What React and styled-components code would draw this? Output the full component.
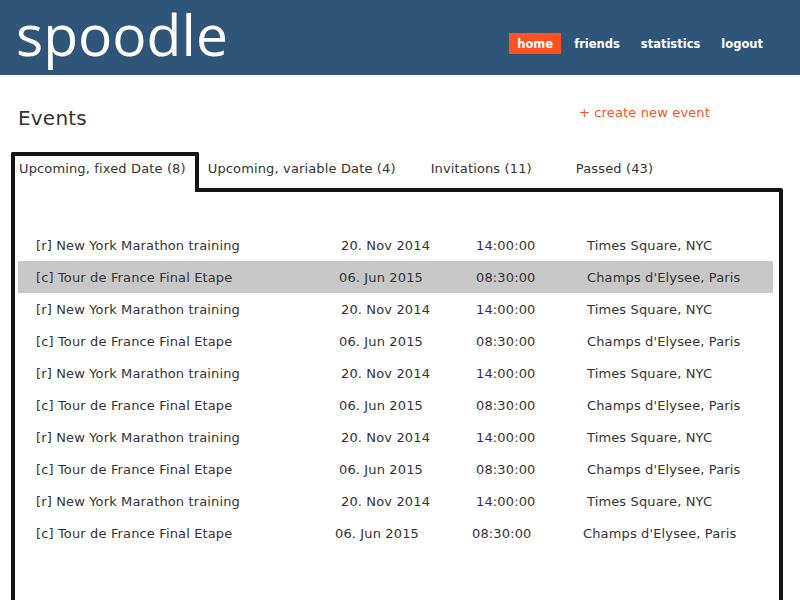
import React from "react";
import styled, { createGlobalStyle } from "styled-components";

const Global = createGlobalStyle`
  html, body { margin: 0; padding: 0; background: #fff; }
  body { font-family: "DejaVu Sans", Verdana, sans-serif; font-size: 13px; letter-spacing: 0.14px; color: #333; overflow: hidden; }
`;

const Header = styled.header`
  height: 75px;
  background: #2f5679;
  display: flex;
  justify-content: space-between;
  align-items: flex-start;
  padding: 0 29px 0 16px;
  box-sizing: border-box;
`;

const Logo = styled.div`
  font-family: "Open Sans", sans-serif;
  font-size: 57px;
  letter-spacing: 0;
  line-height: 68px;
  color: #fff;
`;

const Nav = styled.nav`
  display: flex;
  gap: 5px;
  padding-top: 33px;
`;

const NavItem = styled.a`
  font-weight: bold;
  font-size: 11.5px;
  letter-spacing: 0;
  line-height: 22px;
  height: 21px;
  padding: 0 8px;
  color: #fff;
  background: ${(p) => (p.$active ? "#ff5220" : "transparent")};
`;

const Main = styled.main`
  padding: 0 0 0 11px;
`;

const TitleRow = styled.div`
  display: flex;
  justify-content: space-between;
  align-items: flex-start;
  padding: 0 90px 0 7px;
  margin-top: 29px;
`;

const Title = styled.h1`
  margin: 0;
  font-weight: normal;
  font-size: 20px;
  letter-spacing: 0.2px;
  line-height: 28px;
  color: #333;
`;

const CreateLink = styled.a`
  color: #ff5220;
  font-size: 13px;
  line-height: 16px;
  margin-top: 1px;
`;

const Tabs = styled.div`
  display: flex;
  align-items: flex-start;
  margin-top: 20px;
  position: relative;
  z-index: 1;
  margin-bottom: -4px;
`;

const Tab = styled.div`
  height: ${(p) => (p.$active ? "40px" : "32px")};
  box-sizing: border-box;
  padding: ${(p) => (p.$active ? "5px 9px 0 4px" : "9px 0 0")};
  margin-right: ${(p) => p.$gap || 0}px;
  line-height: 16px;
  background: ${(p) => (p.$active ? "#fff" : "transparent")};
  border: ${(p) => (p.$active ? "4px solid #141414" : "none")};
  border-bottom: none;
  border-radius: 2px 2px 0 0;
  white-space: nowrap;
`;

const Panel = styled.section`
  width: 772px;
  box-sizing: border-box;
  min-height: 460px;
  border: 4px solid #141414;
  border-bottom: none;
  border-radius: 0 3px 0 0;
  padding: 37px 6px 0 3px;
`;

const Table = styled.div`
  display: flex;
  flex-direction: column;
`;

const Row = styled.div`
  display: grid;
  grid-template-columns: 323px 135px 111px 1fr;
  height: 32px;
  align-items: center;
  background: ${(p) => (p.$highlight ? "#c8c8c8" : "transparent")};
  white-space: nowrap;
`;

const Cell = styled.div`
  padding-left: ${(p) => (p.$first ? 18 : 0)}px;
  margin-left: ${(p) => p.$nudge || 0}px;
`;

const events = [
  { name: "[r] New York Marathon training", date: "20. Nov 2014", time: "14:00:00", loc: "Times Square, NYC" },
  { name: "[c] Tour de France Final Etape", date: "06. Jun 2015", time: "08:30:00", loc: "Champs d'Elysee, Paris", dateNudge: -2 },
];

const rows = Array.from({ length: 10 }, (_, i) => ({ ...events[i % 2], highlight: i === 1, last: i === 9 }));

export default function App() {
  return (
    <>
      <Global />
      <Header>
        <Logo>spoodle</Logo>
        <Nav>
          <NavItem $active>home</NavItem>
          <NavItem>friends</NavItem>
          <NavItem>statistics</NavItem>
          <NavItem>logout</NavItem>
        </Nav>
      </Header>
      <Main>
        <TitleRow>
          <Title>Events</Title>
          <CreateLink>+ create new event</CreateLink>
        </TitleRow>
        <Tabs>
          <Tab $active>Upcoming, fixed Date (8)</Tab>
          <Tab $gap={35} style={{ marginLeft: 9 }}>Upcoming, variable Date (4)</Tab>
          <Tab $gap={44}>Invitations (11)</Tab>
          <Tab>Passed (43)</Tab>
        </Tabs>
        <Panel>
          <Table>
            {rows.map((r, i) => (
              <Row key={i} $highlight={r.highlight}>
                <Cell $first>{r.name}</Cell>
                <Cell $nudge={(r.dateNudge || 0) + (r.last ? -4 : 0)}>{r.date}</Cell>
                <Cell $nudge={r.last ? -4 : 0}>{r.time}</Cell>
                <Cell $nudge={r.last ? -4 : 0}>{r.loc}</Cell>
              </Row>
            ))}
          </Table>
        </Panel>
      </Main>
    </>
  );
}
